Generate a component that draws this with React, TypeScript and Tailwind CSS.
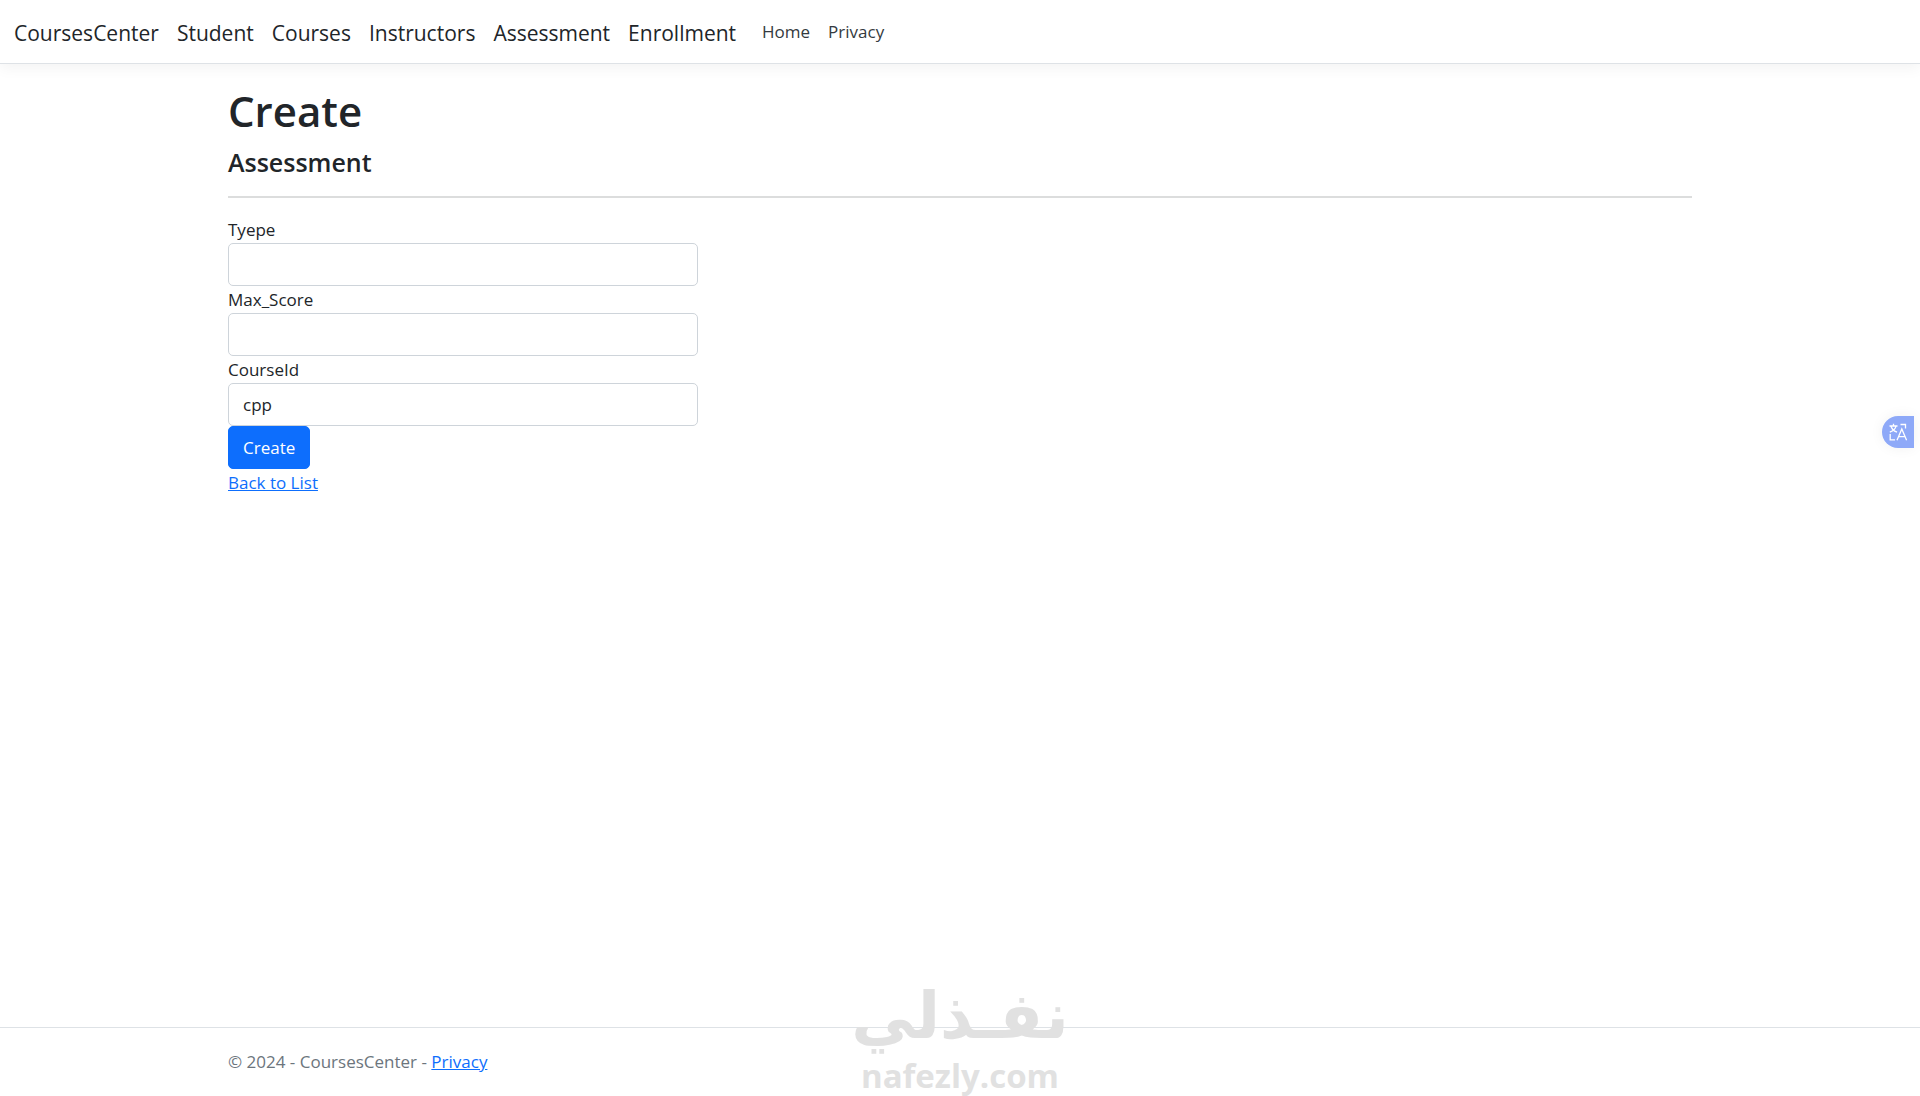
import { useState } from 'react'

const BRAND_LINKS = ['CoursesCenter', 'Student', 'Courses', 'Instructors', 'Assessment', 'Enrollment']
const NAV_LINKS = ['Home', 'Privacy']

const controlClass =
  'block h-[43px] w-full appearance-none rounded-[5px] border border-[#ced4da] bg-white px-3.5 text-[17px] leading-[27px] text-[#212529] outline-none focus:border-[#86b7fe]'

function Header() {
  return (
    <header className="mb-5 border-b border-[#dee2e6] bg-white shadow-[0_4px_14px_rgba(0,0,0,0.05)]">
      <nav className="flex h-[63px] items-center px-3.5">
        <div className="flex gap-[18px] pt-1 text-[21px] text-[#212529]">
          {BRAND_LINKS.map((label) => (
            <a key={label} href="#">{label}</a>
          ))}
        </div>
        <ul className="ml-[26px] flex gap-[18px] text-[17px] text-[#343a40]">
          {NAV_LINKS.map((label) => (
            <li key={label}>
              <a href="#">{label}</a>
            </li>
          ))}
        </ul>
      </nav>
    </header>
  )
}

function AssessmentForm() {
  const [courseId, setCourseId] = useState('cpp')

  return (
    <form className="grid grid-cols-3 gap-[27px]" onSubmit={(e) => e.preventDefault()}>
      <div>
        <label htmlFor="type" className="block">Tyepe</label>
        <input id="type" type="text" className={controlClass} />
        <label htmlFor="maxScore" className="block">Max_Score</label>
        <input id="maxScore" type="text" className={controlClass} />
        <label htmlFor="courseId" className="block">CourseId</label>
        <select
          id="courseId"
          value={courseId}
          onChange={(e) => setCourseId(e.target.value)}
          className={controlClass}
        >
          <option value="cpp">cpp</option>
        </select>
        <button type="submit" className="block h-[43px] rounded-[5px] border border-[#0d6efd] bg-[#0d6efd] px-3.5 text-white">
          Create
        </button>
      </div>
    </form>
  )
}

function TranslateButton() {
  return (
    <button
      type="button"
      aria-label="Translate"
      className="fixed top-[416px] right-1.5 flex h-8 w-8 items-center justify-center rounded-l-full rounded-r-xs bg-[#8ea9f8] shadow-[0_0_14px_rgba(0,0,0,0.06)]"
    >
      <svg viewBox="0 0 20 20" className="h-5 w-5" fill="none" stroke="white" strokeWidth="1.3">
        <path d="M1.500 4h8M5.500 1.800V4M1.800 10.200C5 9 7.500 7 8 4M3 4c.6 2.800 3 5 6 6.200" />
        <path d="M12.500 2.500H17.500V6.500" />
        <path d="M2.200 12V17.800H7" />
        <path d="M9 18.300 13.800 7 18.600 18.300M10.600 14.600h6.400" />
      </svg>
    </button>
  )
}

function Watermark() {
  return (
    <div className="pointer-events-none absolute bottom-0 left-1/2 flex -translate-x-1/2 flex-col items-center font-bold text-[#e1e1e1]">
      <span lang="ar" dir="rtl" className="font-['DejaVu_Sans'] text-[64px] leading-[80px]">نفـذلي</span>
      <span className="font-['Open_Sans'] text-[33px] leading-[40px]">nafezly.com</span>
    </div>
  )
}

export default function App() {
  return (
    <div className="relative flex min-h-screen flex-col bg-white font-['Open_Sans','Noto_Sans',sans-serif] text-[17px] leading-[27px] text-[#212529]">
      <Header />
      <main className="mx-auto w-full max-w-[1492px] grow px-3.5">
        <h1 className="mb-2 text-[42px] leading-[54px] font-semibold">Create</h1>
        <h4 className="text-[25px] leading-8 font-semibold">Assessment</h4>
        <hr className="my-[18px] border-t-2 border-[#dcdddd]" />
        <AssessmentForm />
        <a href="#" className="text-[#0d6efd] underline">Back to List</a>
      </main>
      <footer className="border-t border-[#dee2e6] text-[#6c757d]">
        <div className="mx-auto w-full max-w-[1492px] px-3.5 leading-[68px]">
          &copy; 2024 - CoursesCenter - <a href="#" className="text-[#0d6efd] underline">Privacy</a>
        </div>
      </footer>
      <Watermark />
      <TranslateButton />
    </div>
  )
}
